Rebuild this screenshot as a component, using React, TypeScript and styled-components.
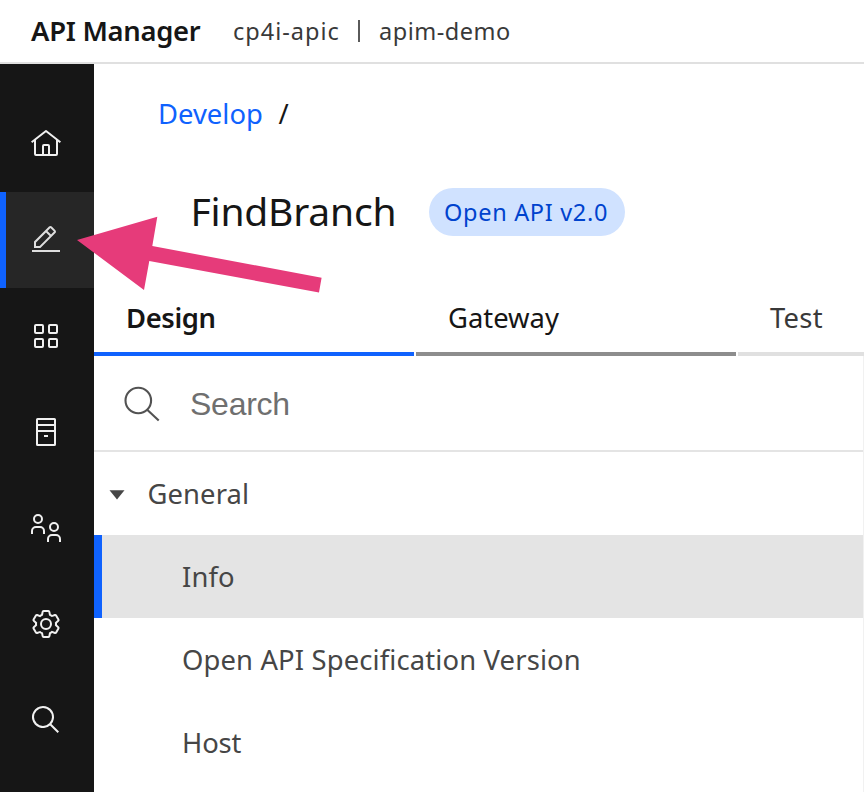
import React from "react";
import styled, { createGlobalStyle } from "styled-components";

const GlobalStyle = createGlobalStyle`
  *, *::before, *::after { box-sizing: border-box; }
  html, body { margin: 0; padding: 0; background: #fff; overflow: hidden; }
  body { font-family: "Noto Sans", sans-serif; color: #161616; }
`;

const Page = styled.div`
  position: relative;
  display: flex;
  flex-direction: column;
  width: 864px;
  height: 792px;
  overflow: hidden;
`;

const Header = styled.header`
  display: flex;
  align-items: center;
  flex: none;
  height: 64px;
  padding-left: 31px;
  border-bottom: 2px solid #e0e0e0;
  white-space: nowrap;
`;

const Product = styled.h1`
  width: 202px;
  margin: 0;
  font-size: 27.4px;
  font-weight: 600;
  line-height: 40px;
  letter-spacing: -0.28px;
`;

const Context = styled.span<{ $width: number; $tracking: number }>`
  width: ${(p) => p.$width}px;
  padding-bottom: 1px;
  font-size: 23.5px;
  line-height: 36px;
  letter-spacing: ${(p) => p.$tracking}px;
  color: #393939;
`;

const Divider = styled.span`
  flex: none;
  width: 2px;
  height: 22px;
  margin-right: 19px;
  background: #5a5a5a;
`;

const Body = styled.div`
  display: flex;
  flex: 1;
  min-height: 0;
`;

const SideNav = styled.nav`
  display: flex;
  flex-direction: column;
  flex: none;
  width: 94px;
  padding-top: 32px;
  background: #161616;
`;

const NavItem = styled.a<{ $active?: boolean }>`
  display: flex;
  align-items: center;
  flex: none;
  height: 96px;
  padding-left: ${(p) => (p.$active ? 24 : 30)}px;
  border-left: ${(p) => (p.$active ? "6px solid #0f62fe" : "none")};
  background: ${(p) => (p.$active ? "#262626" : "transparent")};
  color: ${(p) => (p.$active ? "#dedede" : "#f0f0f0")};

  svg { display: block; width: 32px; height: 32px; }
`;

const Main = styled.main`
  display: flex;
  flex-direction: column;
  flex: 1;
  min-width: 0;
`;

const Breadcrumb = styled.div`
  display: flex;
  gap: 15.5px;
  padding: 30px 0 0 64px;
  font-size: 27.4px;
  line-height: 40px;
`;

const CrumbLink = styled.a`
  color: #0f62fe;
  letter-spacing: 0.02px;
`;

const TitleRow = styled.div`
  display: flex;
  align-items: center;
  height: 48px;
  margin-top: 54px;
  padding-left: 96.5px;
`;

const Title = styled.h2`
  width: 238.5px;
  margin: 0;
  padding-bottom: 2px;
  font-size: 39px;
  font-weight: 400;
  line-height: 46px;
  letter-spacing: -0.2px;
`;

const Tag = styled.span`
  display: flex;
  align-items: center;
  width: 196px;
  height: 48px;
  padding: 0 0 1px 15px;
  border-radius: 24px;
  background: #d0e2ff;
  color: #0043ce;
  font-size: 23.5px;
  letter-spacing: 0.69px;
  white-space: nowrap;
`;

const Tabs = styled.div`
  display: flex;
  gap: 2px;
  flex: none;
  height: 80px;
  margin-top: 40px;
`;

const tabStyles = {
  selected: { line: "#0f62fe", text: "#161616", weight: 600, tracking: -0.4 },
  hovered: { line: "#8d8d8d", text: "#161616", weight: 400, tracking: 0 },
  idle: { line: "#e0e0e0", text: "#393939", weight: 400, tracking: 0.25 },
};

const Tab = styled.div<{ $state: keyof typeof tabStyles }>`
  flex: none;
  width: 320px;
  padding: 22px 0 0 32px;
  border-bottom: 4px solid ${(p) => tabStyles[p.$state].line};
  color: ${(p) => tabStyles[p.$state].text};
  font-size: 27.4px;
  font-weight: ${(p) => tabStyles[p.$state].weight};
  line-height: 40px;
  letter-spacing: ${(p) => tabStyles[p.$state].tracking}px;
`;

const Panel = styled.section`
  flex: 1;
  border-right: 1px solid #f1f1f1;
`;

const SearchBar = styled.label`
  display: flex;
  align-items: center;
  height: 96px;
  padding-left: 28px;
  border-bottom: 2px solid #e4e4e4;

  svg { flex: none; display: block; width: 40px; height: 40px; }
`;

const SearchInput = styled.input`
  width: 500px;
  height: 50px;
  margin: 3px 0 0 28px;
  padding: 0;
  border: 0;
  outline: 0;
  background: transparent;
  font: 32px "Liberation Sans", Arial, sans-serif;
  letter-spacing: -0.25px;

  &::placeholder { color: #6f6f6f; opacity: 1; }
`;

const TreeRow = styled.div<{ $level: 0 | 1; $selected?: boolean; $tracking?: number }>`
  display: flex;
  align-items: center;
  height: 83px;
  padding-left: ${(p) => (p.$level === 0 ? 15 : p.$selected ? 80 : 88)}px;
  border-left: ${(p) => (p.$selected ? "8px solid #0f62fe" : "none")};
  background: ${(p) => (p.$selected ? "#e4e4e4" : "transparent")};
  color: #464646;
  font-size: 27.4px;
  letter-spacing: ${(p) => p.$tracking ?? 0}px;

  svg { display: block; width: 16px; height: 10px; margin: 2px 22.5px 0 0; }
`;

const ArrowOverlay = styled.svg`
  position: absolute;
  left: 70px;
  top: 210px;
  width: 260px;
  height: 90px;
`;

const HomeIcon = () => (
  <svg viewBox="0 0 32 32" fill="currentColor">
    <path d="M16.6123,2.2138a1.01,1.01,0,0,0-1.2427,0L1,13.4194l1.2427,1.5717L4,13.6208V26a2.0041,2.0041,0,0,0,2,2H26a2.0037,2.0037,0,0,0,2-2V13.63L29.7573,15,31,13.4282ZM18,26H14V18h4Zm2,0V18a2.0023,2.0023,0,0,0-2-2H14a2.002,2.002,0,0,0-2,2v8H6V12.0615l10-7.79,10,7.8005V26Z" />
  </svg>
);

const EditIcon = () => (
  <svg viewBox="0 0 32 32" fill="currentColor">
    <path d="M2 26H30V28H2zM25.4 9c.8-.8.8-2 0-2.8l-3.6-3.6c-.8-.8-2-.8-2.8 0l-15 15V24h6.4L25.4 9zM20.4 4L24 7.6l-3 3L17.4 7 20.4 4zM6 22v-3.6l10-10 3.6 3.6-10 10H6z" />
  </svg>
);

const GridIcon = () => (
  <svg viewBox="0 0 32 32" fill="none" stroke="currentColor" strokeWidth="2">
    <rect x="5" y="5" width="8" height="8" rx="1" />
    <rect x="19" y="5" width="8" height="8" rx="1" />
    <rect x="5" y="19" width="8" height="8" rx="1" />
    <rect x="19" y="19" width="8" height="8" rx="1" />
  </svg>
);

const CatalogIcon = () => (
  <svg viewBox="0 0 32 32" fill="none" stroke="currentColor" strokeWidth="2">
    <rect x="7" y="3" width="18" height="26" rx="0.6" />
    <path d="M7 9H25M7 15H25M14 20H18" />
  </svg>
);

const MembersIcon = () => (
  <svg viewBox="0 0 32 32" fill="none" stroke="currentColor" strokeWidth="2">
    <circle cx="8" cy="7" r="4" />
    <path d="M2 22V19a4 4 0 0 1 4-4h4a4 4 0 0 1 4 4v3" />
    <circle cx="24" cy="15" r="4" />
    <path d="M18 30V27a4 4 0 0 1 4-4h4a4 4 0 0 1 4 4v3" />
  </svg>
);

const SettingsIcon = () => (
  <svg viewBox="0 0 32 32" fill="currentColor">
    <path d="M27,16.76c0-.25,0-.5,0-.76s0-.51,0-.77l1.92-1.68A2,2,0,0,0,29.3,11L26.94,7a2,2,0,0,0-1.73-1,2,2,0,0,0-.64.1l-2.43.82a11.35,11.35,0,0,0-1.31-.75l-.51-2.52a2,2,0,0,0-2-1.61H13.64a2,2,0,0,0-2,1.61l-.51,2.52a11.48,11.48,0,0,0-1.32.75L7.43,6.06A2,2,0,0,0,6.79,6,2,2,0,0,0,5.06,7L2.7,11a2,2,0,0,0,.41,2.51L5,15.24c0,.25,0,.5,0,.76s0,.51,0,.77L3.11,18.45A2,2,0,0,0,2.7,21L5.06,25a2,2,0,0,0,1.73,1,2,2,0,0,0,.64-.1l2.43-.82a11.35,11.35,0,0,0,1.31.75l.51,2.52a2,2,0,0,0,2,1.61h4.72a2,2,0,0,0,2-1.61l.51-2.52a11.48,11.48,0,0,0,1.32-.75l2.42.82a2,2,0,0,0,.64.1,2,2,0,0,0,1.73-1L29.3,21a2,2,0,0,0-.41-2.51ZM25.21,24l-3.43-1.16a8.86,8.86,0,0,1-2.71,1.57L18.36,28H13.64l-.71-3.55a9.36,9.36,0,0,1-2.7-1.57L6.79,24,4.43,20l2.72-2.4a8.9,8.9,0,0,1,0-3.13L4.43,12,6.79,8l3.43,1.16a8.86,8.86,0,0,1,2.71-1.57L13.64,4h4.72l.71,3.55a9.36,9.36,0,0,1,2.7,1.57L25.21,8,27.57,12l-2.72,2.4a8.9,8.9,0,0,1,0,3.13L27.57,20Z" />
    <circle cx="16" cy="16" r="5" fill="none" stroke="currentColor" strokeWidth="2" />
  </svg>
);

const SearchIcon = () => (
  <svg viewBox="0 0 32 32" fill="currentColor">
    <path d="M29,27.5859l-7.5521-7.5521a11.0177,11.0177,0,1,0-1.4141,1.4141L27.5859,29ZM4,13a9,9,0,1,1,9,9A9.01,9.01,0,0,1,4,13Z" />
  </svg>
);

const FieldSearchIcon = () => (
  <svg viewBox="0 0 40 40" fill="none" stroke="#525252" strokeWidth="2.1">
    <circle cx="16.3" cy="17.5" r="12.8" />
    <path d="M25.2 26.8L36.7 37.6" />
  </svg>
);

const Caret = () => (
  <svg viewBox="0 0 16 10">
    <path d="M0.5 0.3H15.5L8 9.6Z" fill="#464646" />
  </svg>
);

const navItems = [
  { id: "home", Icon: HomeIcon },
  { id: "develop", Icon: EditIcon, active: true },
  { id: "apps", Icon: GridIcon },
  { id: "catalog", Icon: CatalogIcon },
  { id: "members", Icon: MembersIcon },
  { id: "settings", Icon: SettingsIcon },
  { id: "search", Icon: SearchIcon },
];

export default function App() {
  return (
    <Page>
      <GlobalStyle />
      <Header>
        <Product>API Manager</Product>
        <Context $width={125} $tracking={1}>cp4i-apic</Context>
        <Divider />
        <Context $width={150} $tracking={0.5}>apim-demo</Context>
      </Header>
      <Body>
        <SideNav>
          {navItems.map(({ id, Icon, active }) => (
            <NavItem key={id} $active={active}>
              <Icon />
            </NavItem>
          ))}
        </SideNav>
        <Main>
          <Breadcrumb>
            <CrumbLink>Develop</CrumbLink>
            <span>/</span>
          </Breadcrumb>
          <TitleRow>
            <Title>FindBranch</Title>
            <Tag>Open API v2.0</Tag>
          </TitleRow>
          <Tabs>
            <Tab $state="selected">Design</Tab>
            <Tab $state="hovered">Gateway</Tab>
            <Tab $state="idle">Test</Tab>
          </Tabs>
          <Panel>
            <SearchBar>
              <FieldSearchIcon />
              <SearchInput placeholder="Search" />
            </SearchBar>
            <TreeRow $level={0} $tracking={0.1}>
              <Caret />
              General
            </TreeRow>
            <TreeRow $level={1} $selected $tracking={0.12}>Info</TreeRow>
            <TreeRow $level={1} $tracking={0.14}>Open API Specification Version</TreeRow>
            <TreeRow $level={1} $tracking={-0.15}>Host</TreeRow>
          </Panel>
        </Main>
      </Body>
      <ArrowOverlay viewBox="70 210 260 90">
        <polygon
          points="77,240 157.3,216.8 152.3,246 321.6,277.8 319,292.5 149.3,261 144,290"
          fill="#e63b7a"
        />
      </ArrowOverlay>
    </Page>
  );
}
